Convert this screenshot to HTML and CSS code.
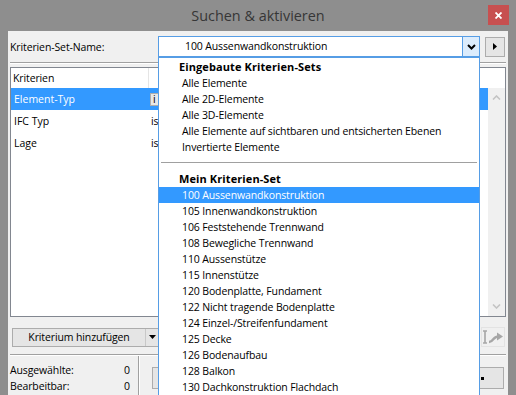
FILE: index.html
```html
<!DOCTYPE html>
<html lang="de">
<head>
<meta charset="utf-8">
<title>Suchen &amp; aktivieren</title>
<link rel="stylesheet" href="styles.css">
</head>
<body>
<div class="window">
  <div class="titlebar">
    <span class="title">Suchen &amp; aktivieren</span>
    <div class="close"><svg width="7" height="7" viewBox="0 0 7 7"><path d="M0.5 0.5 L6.5 6.5 M6.5 0.5 L0.5 6.5" stroke="#fff" stroke-width="1.8" fill="none"/></svg></div>
  </div>
  <div class="client">
    <div class="toprow">
      <div class="label">Kriterien-Set-Name:</div>
      <div class="combo">
        <div class="combo-text">100 Aussenwandkonstruktion</div>
        <div class="combo-btn"><svg width="9" height="6" viewBox="0 0 9 6"><path d="M1 1 L4.5 4.5 L8 1" stroke="#000" stroke-width="2" fill="none"/></svg></div>
      </div>
      <div class="nextbtn"><svg width="4" height="7" viewBox="0 0 4 7"><path d="M0 0 L4 3.5 L0 7 Z" fill="#000"/></svg></div>
    </div>
    <div class="sep"></div>
    <div class="table">
      <div class="thead">
        <div class="th th1">Kriterien</div>
        <div class="th th2"></div>
      </div>
      <div class="tbody">
        <div class="rows">
          <div class="row selected">
            <div class="cell c1">Element-Typ</div>
            <div class="cell c2"><span class="cellcombo">i</span></div>
          </div>
          <div class="row">
            <div class="cell c1">IFC Typ</div>
            <div class="cell c2">is</div>
          </div>
          <div class="row">
            <div class="cell c1">Lage</div>
            <div class="cell c2">is</div>
          </div>
        </div>
        <div class="scrollbar">
          <svg class="chev" width="9" height="5" viewBox="0 0 9 5"><path d="M1 4.5 L4.5 1 L8 4.5" stroke="#c4c4c4" stroke-width="1.6" fill="none"/></svg>
          <svg class="chev" width="9" height="5" viewBox="0 0 9 5"><path d="M1 0.5 L4.5 4 L8 0.5" stroke="#c4c4c4" stroke-width="1.6" fill="none"/></svg>
        </div>
      </div>
    </div>
    <div class="btnrow">
      <div class="splitbtn">
        <div class="split-main">Kriterium hinzufügen</div>
        <div class="split-arrow"><svg width="7" height="4" viewBox="0 0 7 4"><path d="M0 0 L7 0 L3.5 4 Z" fill="#000"/></svg></div>
      </div>
      <div class="iconbtn">
        <svg width="22" height="16" viewBox="0 0 22 16"><path d="M1 2 H5 M3 2 V14 M1 14 H5" stroke="#a6a6a6" stroke-width="1.6" fill="none"/><path d="M7 13 C9 13 10 12 11.5 10 C13 8 14 7.5 17 7.5" stroke="#a6a6a6" stroke-width="2.4" fill="none"/><path d="M15 3.5 L21 7.5 L15 11.5 Z" fill="#a6a6a6"/></svg>
      </div>
    </div>
    <div class="sep2"></div>
    <div class="status">
      <div class="counts">
        <div class="countrow"><span>Ausgewählte:</span><span>0</span></div>
        <div class="countrow"><span>Bearbeitbar:</span><span>0</span></div>
      </div>
      <div class="vsep"></div>
      <div class="actbtn"></div>
      <div class="actbtn2"><span class="dot"></span></div>
    </div>
  </div>

  <div class="dropdown">
    <div class="dd-head">Eingebaute Kriterien-Sets</div>
    <div class="dd-item">Alle Elemente</div>
    <div class="dd-item">Alle 2D-Elemente</div>
    <div class="dd-item">Alle 3D-Elemente</div>
    <div class="dd-item">Alle Elemente auf sichtbaren und entsicherten Ebenen</div>
    <div class="dd-item">Invertierte Elemente</div>
    <div class="dd-sep"></div>
    <div class="dd-head">Mein Kriterien-Set</div>
    <div class="dd-item dd-selected">100 Aussenwandkonstruktion</div>
    <div class="dd-item">105 Innenwandkonstruktion</div>
    <div class="dd-item">106 Feststehende Trennwand</div>
    <div class="dd-item">108 Bewegliche Trennwand</div>
    <div class="dd-item">110 Aussenstütze</div>
    <div class="dd-item">115 Innenstütze</div>
    <div class="dd-item">120 Bodenplatte, Fundament</div>
    <div class="dd-item">122 Nicht tragende Bodenplatte</div>
    <div class="dd-item">124 Einzel-/Streifenfundament</div>
    <div class="dd-item">125 Decke</div>
    <div class="dd-item">126 Bodenaufbau</div>
    <div class="dd-item">128 Balkon</div>
    <div class="dd-item">130 Dachkonstruktion Flachdach</div>
  </div>
</div>
</body>
</html>
```

FILE: styles.css
```css
* { box-sizing: border-box; }
html, body { margin: 0; padding: 0; }
body {
  width: 516px;
  height: 395px;
  overflow: hidden;
  background: #8e8e8e;
  font-family: "Open Sans", "Noto Sans", sans-serif;
  font-size: 10.5px;
  letter-spacing: -0.12px;
  color: #000;
}
.window {
  position: relative;
  width: 516px;
  height: 395px;
  display: flex;
  flex-direction: column;
  overflow: hidden;
}
.titlebar {
  height: 31px;
  flex: none;
  display: flex;
  align-items: center;
  justify-content: center;
  position: relative;
}
.title {
  font-size: 14.4px;
  letter-spacing: 0;
  color: #363636;
  margin-top: -1px;
}
.close {
  position: absolute;
  left: 488px;
  top: 5px;
  width: 21px;
  height: 20px;
  background: #c75050;
  display: flex;
  align-items: center;
  justify-content: center;
}
.client {
  flex: 1;
  margin: 0 8px;
  background: #f0f0f0;
  padding: 5px 2px 0 2px;
  display: flex;
  flex-direction: column;
}
.toprow {
  display: flex;
  align-items: center;
  height: 21px;
}
.label { width: 148px; }
.combo {
  width: 322px;
  height: 21px;
  border: 1px solid #569de5;
  background: #fff;
  display: flex;
}
.combo-text {
  flex: 1;
  padding-left: 26px;
  line-height: 19px;
}
.combo-btn {
  width: 17px;
  background: #dcecfc;
  border-left: 1px solid #569de5;
  display: flex;
  align-items: center;
  justify-content: center;
}
.nextbtn {
  margin-left: 5px;
  width: 20px;
  height: 20px;
  border: 1px solid #acacac;
  background: #e5e5e5;
  display: flex;
  align-items: center;
  justify-content: center;
}
.sep {
  margin-top: 5px;
  height: 2px;
  border-top: 1px solid #a0a0a0;
  border-bottom: 1px solid #fff;
}
.table {
  margin-top: 3px;
  height: 250px;
  border: 1px solid #828790;
  background: #fff;
  display: flex;
  flex-direction: column;
}
.thead {
  height: 20px;
  display: flex;
  flex: none;
}
.th { line-height: 20px; }
.th1 {
  width: 138px;
  padding-left: 2px;
  border-right: 1px solid #e5e5e5;
}
.tbody {
  flex: 1;
  display: flex;
}
.rows { flex: 1; }
.row {
  height: 22px;
  display: flex;
  align-items: center;
}
.row.selected { background: #3399ff; color: #fff; }
.cell.c1 { width: 138px; padding-left: 3px; letter-spacing: 0; }
.cell.c2 { padding-left: 2px; color: #000; }
.cellcombo {
  display: inline-block;
  width: 60px;
  height: 13px;
  line-height: 11px;
  padding-left: 2px;
  background: #e8e8e8;
  border: 1px solid #adadad;
  margin-left: -1px;
}
.scrollbar {
  width: 17px;
  background: #f0f0f0;
  display: flex;
  flex-direction: column;
  justify-content: space-between;
  align-items: center;
  padding: 7px 0 7px;
}
.btnrow {
  margin-top: 10px;
  display: flex;
  align-items: center;
  padding-left: 2px;
}
.splitbtn {
  display: flex;
  width: 170px;
  height: 19px;
  border: 1px solid #acacac;
  background: #e5e5e5;
}
.split-main {
  width: 133px;
  text-align: center;
  line-height: 17px;
  border-right: 1px solid #c8c8c8;
}
.split-arrow {
  width: 12px;
  display: flex;
  align-items: center;
  justify-content: center;
}
.iconbtn {
  margin-left: auto;
  margin-right: 1px;
  width: 24px;
  height: 20px;
  border: 1px solid #e3e3e3;
  display: flex;
  align-items: center;
  justify-content: center;
}
.sep2 {
  margin-top: 7px;
  height: 2px;
  border-top: 1px solid #a0a0a0;
  border-bottom: 1px solid #fff;
}
.status {
  flex: 1;
  display: flex;
}
.counts {
  width: 120px;
  padding-top: 6px;
}
.countrow {
  height: 16px;
  display: flex;
  justify-content: space-between;
  align-items: center;
}
.vsep {
  margin-left: 8px;
  background: #a0a0a0;
  border-right: 1px solid #fff;
  width: 2px;
}
.actbtn {
  margin-left: 12px;
  margin-top: 11px;
  width: 160px;
  height: 22px;
  border: 1px solid #acacac;
  background: #e5e5e5;
}
.actbtn2 {
  margin-left: auto;
  margin-right: 2px;
  margin-top: 11px;
  width: 25px;
  height: 22px;
  border: 1px solid #acacac;
  background: #e5e5e5;
  position: relative;
}
.dot {
  position: absolute;
  left: 1px;
  top: 9px;
  width: 3px;
  height: 3px;
  background: #000;
}
.dropdown {
  position: absolute;
  left: 158px;
  top: 57px;
  width: 322px;
  height: 360px;
  border: 1px solid #569de5;
  background: #fff;
  padding-top: 1px;
}
.dd-head {
  height: 16px;
  line-height: 16px;
  padding-left: 20px;
  font-weight: bold;
  font-size: 11px;
  letter-spacing: 0.1px;
}
.dd-item {
  height: 16px;
  line-height: 16px;
  padding-left: 23px;
}
.dd-selected { background: #3399ff; color: #fff; }
.dd-sep {
  height: 16px;
  position: relative;
}
.dd-sep::after {
  content: "";
  position: absolute;
  left: 2px;
  right: 2px;
  top: 7px;
  height: 1px;
  background: #a0a0a0;
}
```
